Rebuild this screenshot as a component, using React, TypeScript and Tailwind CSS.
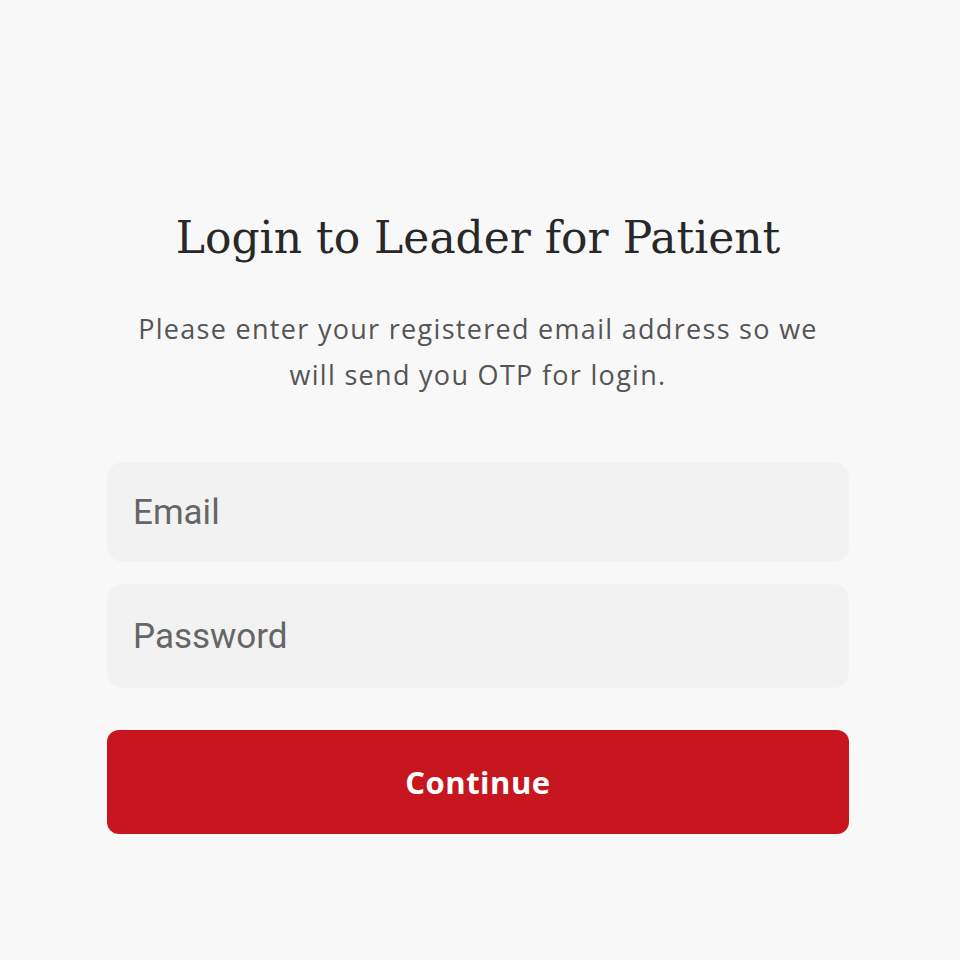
import React from 'react';

const App: React.FC = () => {
  return (
    <div className="min-h-[960px] w-full bg-[#f8f8f8] flex flex-col items-center pt-[208px] pr-[4px]">
      <div className="w-[742px] flex flex-col items-center">
        <h1 className="text-[44px] leading-[60px] text-[#282828] font-['DejaVu_Serif','Liberation_Serif',serif]">
          Login to Leader for Patient
        </h1>
        <p className="mt-[38px] w-[720px] text-center text-[27px] leading-[46px] tracking-[1.3px] text-[#555555] font-['Open_Sans','Noto_Sans',sans-serif]">
          Please enter your registered email address so we will send you OTP for login.
        </p>
        <div className="mt-[64px] w-full flex flex-col gap-[22px]">
          <input
            type="email"
            placeholder="Email"
            className="h-[100px] w-full rounded-[16px] bg-[#f2f2f2] px-[26px] text-[35px] text-[#444] placeholder:text-[#666] outline-none font-['Roboto','Noto_Sans',sans-serif]"
          />
          <input
            type="password"
            placeholder="Password"
            className="h-[104px] w-full rounded-[16px] bg-[#f2f2f2] px-[26px] text-[35px] text-[#444] placeholder:text-[#666] outline-none font-['Roboto','Noto_Sans',sans-serif]"
          />
        </div>
        <button className="mt-[42px] h-[104px] w-full rounded-[12px] bg-[#c8161f] text-[31px] tracking-[0.5px] font-bold text-white font-['Open_Sans','Noto_Sans',sans-serif]">
          Continue
        </button>
      </div>
    </div>
  );
};

export default App;
